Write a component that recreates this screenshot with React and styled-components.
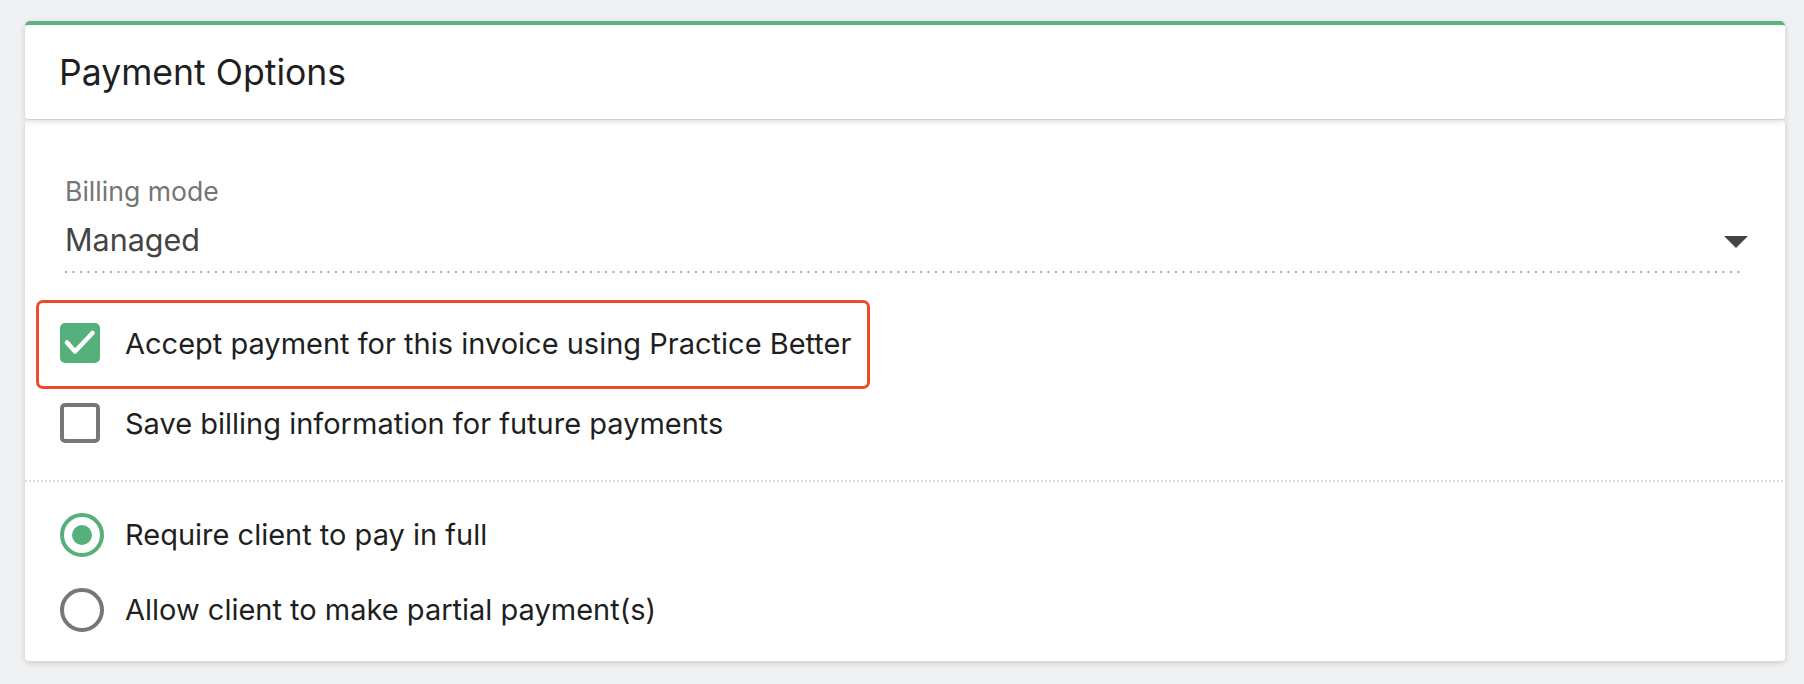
import React from "react"
import styled, { createGlobalStyle } from "styled-components"

const GREEN = "#56b07c"
const GREY = "#777777"

const GlobalStyle = createGlobalStyle`
  html, body {
    margin: 0;
    padding: 0;
    background: #f0f1f3;
    font-family: Inter, "Noto Sans", sans-serif;
  }
`

const StyledPage = styled.div`
  padding: 21px 19px 22px 25px;
`

const StyledHeader = styled.div`
  height: 94px;
  display: flex;
  align-items: center;
  padding: 0 34px;
  background: #fff;
  border-top: 4px solid #5db37e;
  border-radius: 5px 5px 4px 4px;
  box-shadow: 0 2px 6px rgba(0, 0, 0, 0.16);
  position: relative;
  z-index: 1;
`

const StyledTitle = styled.h2`
  margin: 0;
  font-size: 35.6px;
  font-weight: 400;
  color: #1f1f1f;
`

const StyledBody = styled.div`
  margin-top: 1px;
  background: #fff;
  border-radius: 4px;
  box-shadow: 0 2px 6px rgba(0, 0, 0, 0.16);
  padding-bottom: 14px;
`

const StyledSection = styled.div`
  padding: ${(p) => p.padding};
`

const StyledField = styled.div`
  position: relative;
  padding-bottom: 15px;
  margin-left: 5px;
  background-image: linear-gradient(to right, #a8a8a8 2px, transparent 2px);
  background-size: 7.5px 2px;
  background-repeat: repeat-x;
  background-position: left bottom;
  border-bottom: 2px solid transparent;
`

const StyledFieldLabel = styled.div`
  font-size: 26.6px;
  line-height: 32px;
  color: #757575;
`

const StyledFieldValue = styled.div`
  margin-top: 15px;
  font-size: 30.5px;
  line-height: 36px;
  color: #444;
`

const StyledCaret = styled.span`
  position: absolute;
  right: -8px;
  top: 61px;
  width: 0;
  height: 0;
  border-left: 12.5px solid transparent;
  border-right: 12.5px solid transparent;
  border-top: 12px solid #444;
`

const StyledOptions = styled.div`
  display: flex;
  flex-direction: column;
  margin-top: ${(p) => p.top || 0}px;
`

const StyledOption = styled.label`
  position: relative;
  display: flex;
  align-items: center;
  gap: ${(p) => p.gap}px;
  height: ${(p) => p.rowHeight}px;
  width: fit-content;
  font-size: 29px;
  color: #1f1f1f;

  ${(p) =>
    p.highlighted &&
    `
    &::after {
      content: "";
      position: absolute;
      top: -3px;
      bottom: -6px;
      left: -24px;
      right: -19px;
      border: 3px solid #f0492a;
      border-radius: 7px;
      pointer-events: none;
    }
  `}
`

const StyledCheckbox = styled.span`
  box-sizing: border-box;
  flex: none;
  width: 40px;
  height: 40px;
  border-radius: 5px;
  display: flex;
  align-items: center;
  justify-content: center;
  background: ${(p) => (p.checked ? GREEN : "#fff")};
  border: ${(p) => (p.checked ? "none" : `4px solid ${GREY}`)};
`

const StyledRadio = styled.span`
  box-sizing: border-box;
  flex: none;
  width: 44px;
  height: 44px;
  border-radius: 50%;
  border: 4px solid ${(p) => (p.checked ? GREEN : GREY)};
  display: flex;
  align-items: center;
  justify-content: center;

  &::before {
    content: "";
    width: 20px;
    height: 20px;
    border-radius: 50%;
    background: ${(p) => (p.checked ? GREEN : "transparent")};
  }
`

const StyledDivider = styled.div`
  margin-top: 17px;
  height: 2px;
  background-image: linear-gradient(to right, #dcdcdc 2px, transparent 2px);
  background-size: 4px 2px;
  background-repeat: repeat-x;
`

const Tick = () => (
  <svg width="40" height="40" viewBox="0 0 40 40">
    <path
      d="M7 19.5 L15 28.5 L32.5 10"
      fill="none"
      stroke="#fff"
      strokeWidth="4.5"
      strokeLinecap="round"
      strokeLinejoin="round"
    />
  </svg>
)

const Checkbox = ({ checked, highlighted, children }) => (
  <StyledOption rowHeight={80} gap={25} highlighted={highlighted}>
    <StyledCheckbox checked={checked}>{checked && <Tick />}</StyledCheckbox>
    <span>{children}</span>
  </StyledOption>
)

const Radio = ({ checked, children }) => (
  <StyledOption rowHeight={75} gap={21}>
    <StyledRadio checked={checked} />
    <span>{children}</span>
  </StyledOption>
)

const App = () => {
  return (
    <StyledPage>
      <GlobalStyle />
      <StyledHeader>
        <StyledTitle>Payment Options</StyledTitle>
      </StyledHeader>
      <StyledBody>
        <StyledSection padding="55px 45px 0 35px">
          <StyledField>
            <StyledFieldLabel>Billing mode</StyledFieldLabel>
            <StyledFieldValue>Managed</StyledFieldValue>
            <StyledCaret />
          </StyledField>
          <StyledOptions top={28}>
            <Checkbox checked highlighted>
              Accept payment for this invoice using Practice Better
            </Checkbox>
            <Checkbox>Save billing information for future payments</Checkbox>
          </StyledOptions>
        </StyledSection>
        <StyledDivider />
        <StyledSection padding="15px 45px 0 35px">
          <StyledOptions>
            <Radio checked>Require client to pay in full</Radio>
            <Radio>Allow client to make partial payment(s)</Radio>
          </StyledOptions>
        </StyledSection>
      </StyledBody>
    </StyledPage>
  )
}

export default App
